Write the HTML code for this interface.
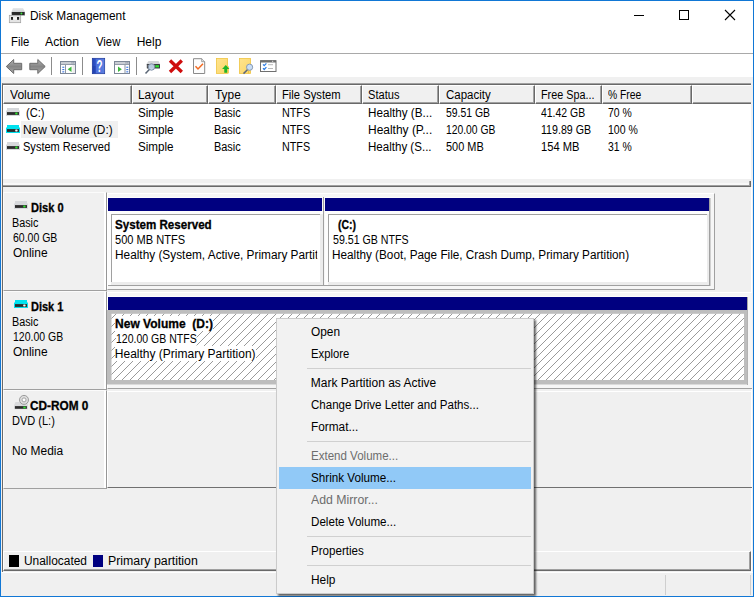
<!DOCTYPE html>
<html><head><meta charset="utf-8"><title>Disk Management</title>
<style>
*{box-sizing:border-box;margin:0;padding:0}
html,body{width:754px;height:597px;overflow:hidden;background:#fff}
body{font-family:"Liberation Sans",sans-serif;font-size:12px;color:#000;position:relative}
.a{position:absolute}
.t{position:absolute;transform-origin:0 0;white-space:nowrap;line-height:14px;height:14px;font-size:12px}
.b{font-weight:bold;-webkit-text-stroke:.3px #000}
.hc{position:absolute;top:85px;height:19px;background:#f0f0f0;border-top:1px solid #fff;border-left:1px solid #fff;border-right:1px solid #696969;border-bottom:1px solid #696969;box-shadow:inset -1px -1px 0 #a0a0a0}
.lp{position:absolute;left:3px;width:104px;height:99px;background:#f0f0f0;border-left:1px solid #fbfbfb;border-top:1px solid #fbfbfb;border-right:1px solid #969696;border-bottom:1px solid #a0a0a0}
.lp i{position:absolute;right:0;top:0;width:2px;height:100%;background:#fff}
.navy{position:absolute;height:13px;background:#000080}
.box{position:absolute;background:#fff;border-top:1px solid #a0a0a0;border-left:1px solid #a0a0a0}
.cell{position:absolute;background:#ececec;box-shadow:inset 3px 3px 0 #fdfdfd}
.ms{position:absolute;left:307px;width:224px;height:1px;background:#d0d0d0}
</style></head><body>
<!-- window frame -->
<div class="a" style="left:0;top:0;width:754px;height:597px;border:1px solid #1177d5;background:#fff"></div>

<!-- title bar -->
<svg class="a" style="left:0;top:0" width="40" height="30" viewBox="0 0 40 30">
 <defs><linearGradient id="gt" x1="0" y1="0" x2="0" y2="1"><stop offset="0" stop-color="#e8eaec"/><stop offset="1" stop-color="#b4b7bb"/></linearGradient></defs>
 <path d="M13 8h10l2 4v4h-13.500v-4z" fill="url(#gt)"/>
 <rect x="11.800" y="12" width="12.900" height="2.900" rx=".4" fill="#2a2a2a"/>
 <circle cx="21.400" cy="13.450" r=".95" fill="#3be43b"/>
 <rect x="9.300" y="15.300" width="11.400" height="7.400" fill="#e4e4e4" stroke="#9d9d9d" stroke-width=".7"/>
 <rect x="11" y="17" width="2.100" height="2.800" fill="#222"/>
 <rect x="17" y="17" width="2.100" height="2.800" fill="#222"/>
 <rect x="13.100" y="17.300" width="3.900" height="2.200" fill="#f6f6f6"/>
</svg>
<div class="t" style="left:29.76px;top:9px;transform:scaleX(0.9869)">Disk Management</div>
<div class="a" style="left:634px;top:15px;width:10px;height:1px;background:#000"></div>
<div class="a" style="left:679px;top:10px;width:10px;height:10px;border:1px solid #000"></div>
<svg class="a" style="left:724px;top:9px" width="12" height="12" viewBox="0 0 12 12"><path d="M1 1L11 11M11 1L1 11" stroke="#000" stroke-width="1.100" fill="none"/></svg>

<!-- menu -->
<div class="t" style="left:10.71px;top:35px;transform:scaleX(0.9408)">File</div>
<div class="t" style="left:45.45px;top:35px;transform:scaleX(1.0185)">Action</div>
<div class="t" style="left:96.45px;top:35px;transform:scaleX(0.9437)">View</div>
<div class="t" style="left:136.65px;top:35px">Help</div>
<div class="a" style="left:1px;top:53px;width:752px;height:1px;background:#a9a9a9"></div>

<!-- gray client area below toolbar -->
<div class="a" style="left:1px;top:77px;width:752px;height:519px;background:#f0f0f0"></div>

<!-- toolbar icons -->
<svg class="a" style="left:0;top:54px" width="300" height="23" viewBox="0 54 300 23">
 <defs>
  <linearGradient id="ga" x1="0" y1="0" x2="0" y2="1"><stop offset="0" stop-color="#b4b4b4"/><stop offset=".5" stop-color="#868686"/><stop offset="1" stop-color="#a8a8a8"/></linearGradient>
  <linearGradient id="gh" x1="0" y1="0" x2="1" y2="0"><stop offset="0" stop-color="#2446b8"/><stop offset=".25" stop-color="#2d52c6"/><stop offset=".3" stop-color="#4a6edb"/><stop offset="1" stop-color="#5c7fe0"/></linearGradient>
  <linearGradient id="gy" x1="0" y1="0" x2="1" y2="1"><stop offset="0" stop-color="#ffe48f"/><stop offset="1" stop-color="#fbd667"/></linearGradient>
 </defs>
 <path d="M6.300 66.500l7.400-7v3.800h8v6.400h-8v3.800z" fill="url(#ga)" stroke="#6c6c6c" stroke-width="1" stroke-linejoin="round"/>
 <path d="M45.200 66.500l-7.400-7v3.800h-8v6.400h8v3.800z" fill="url(#ga)" stroke="#6c6c6c" stroke-width="1" stroke-linejoin="round"/>
 <rect x="51" y="57" width="1" height="18" fill="#8c8c8c"/>
 <rect x="60.500" y="61.500" width="15" height="12" fill="#fff" stroke="#7d8797"/>
 <rect x="61" y="62" width="14" height="2.300" fill="#c9cdd4"/>
 <rect x="61" y="64.200" width="14" height=".8" fill="#7d8797"/>
 <rect x="71.500" y="62.400" width="1" height="1" fill="#6f7a8c"/><rect x="73.300" y="62.400" width="1" height="1" fill="#6f7a8c"/>
 <rect x="65" y="65" width="1" height="8" fill="#8c96a5"/>
 <rect x="72.500" y="65" width="2.500" height="8" fill="#ececec"/>
 <rect x="62.300" y="66.700" width="2" height="1.100" fill="#3a74e0"/><rect x="62.300" y="69" width="2" height="1.100" fill="#3a74e0"/><rect x="62.300" y="71.300" width="2" height="1.100" fill="#3a74e0"/>
 <path d="M71.500 66.500v5.600l-3.800-2.800z" fill="#3db83d"/>
 <rect x="82" y="57" width="1" height="18" fill="#8c8c8c"/>
 <rect x="92.300" y="58.300" width="12.400" height="15.400" fill="url(#gh)" stroke="#1d3799" stroke-width=".7"/>
 <rect x="92.700" y="66" width="2.800" height="7.400" fill="#2140ad" opacity=".7"/>
 <text x="99.400" y="71.600" font-family="Liberation Sans, sans-serif" font-size="16" font-weight="bold" fill="#fff" text-anchor="middle" textLength="6" lengthAdjust="spacingAndGlyphs">?</text>
 <rect x="114.500" y="61.500" width="15" height="12" fill="#fff" stroke="#7d8797"/>
 <rect x="115" y="62" width="14" height="2.300" fill="#c9cdd4"/>
 <rect x="115" y="64.200" width="14" height=".8" fill="#7d8797"/>
 <rect x="125.500" y="62.400" width="1" height="1" fill="#6f7a8c"/><rect x="127.300" y="62.400" width="1" height="1" fill="#6f7a8c"/>
 <rect x="124.500" y="65" width="1" height="8" fill="#8c96a5"/>
 <rect x="126.300" y="66.700" width="2" height="1.100" fill="#3a74e0"/><rect x="126.300" y="69" width="2" height="1.100" fill="#3a74e0"/><rect x="126.300" y="71.300" width="2" height="1.100" fill="#3a74e0"/>
 <path d="M118 66.500v5.600l3.800-2.800z" fill="#3db83d"/>
 <rect x="136" y="57" width="1" height="18" fill="#8c8c8c"/>
 <path d="M148.500 61h10l1.500 3v1h-13.500v-1z" fill="#d4d6d9"/>
 <rect x="146.800" y="64" width="13.200" height="4.600" rx=".5" fill="#3a3d42"/>
 <rect x="147.500" y="65" width="2" height="2.500" fill="#777"/>
 <rect x="155.300" y="65.200" width="3.700" height="2.200" fill="#2fe02f"/>
 <circle cx="151.500" cy="67" r="3.200" fill="#c6daf0" fill-opacity=".9" stroke="#7f8fa6" stroke-width="1"/>
 <path d="M149.300 69.600l-3.800 4" stroke="#5a6675" stroke-width="1.500"/>
 <path d="M170 60.600l11.800 11.300M181.800 60.600l-11.800 11.300" stroke="#cf0d0d" stroke-width="3.400"/>
 <path d="M193.500 58.700h8.200l3 3v11.800h-11.200z" fill="#fcfcfc" stroke="#8a8a8a"/>
 <path d="M201.700 58.700v3h3" fill="#e8e8e8" stroke="#8a8a8a" stroke-width=".8"/>
 <path d="M195.500 66.300l2.500 2.700l5-5.200" fill="none" stroke="#f26a21" stroke-width="1.500"/>
 <rect x="216.400" y="58.400" width="11.200" height="15" fill="url(#gy)" stroke="#efc543" stroke-width=".8"/>
 <rect x="224" y="66.300" width="5" height="7.100" fill="#f9d15c"/>
 <path d="M225.800 65l3.600 3.900h-2.200v3.800h-2.900v-3.800h-2.200z" fill="#1fb52a"/>
 <rect x="239.400" y="58.400" width="11.200" height="15" fill="url(#gy)" stroke="#efc543" stroke-width=".8"/>
 <rect x="248" y="70" width="1" height="3.400" fill="#efc543"/>
 <circle cx="249.600" cy="67.200" r="3.100" fill="#c9def5" stroke="#8a9bb3" stroke-width="1"/>
 <path d="M247.400 69.700l-3.900 3.900" stroke="#5d6878" stroke-width="1.500"/>
 <rect x="260.500" y="60.700" width="15.500" height="10.800" fill="#fff" stroke="#6f6f6f"/>
 <rect x="260.500" y="60.300" width="15.500" height="2.200" fill="#6f6f6f"/>
 <rect x="272" y="60.800" width="1.200" height="1" fill="#ddd"/>
 <path d="M263 64.400l1.200 1.300l2.200-2.400M263 68.200l1.200 1.300l2.200-2.400" fill="none" stroke="#2b7be4" stroke-width="1.200"/>
 <rect x="268" y="64.200" width="5" height="1" fill="#b9b9b9"/><rect x="268" y="68" width="5" height="1" fill="#b9b9b9"/>
</svg>

<!-- list view -->
<div class="a" style="left:2px;top:83px;width:749px;height:96px;background:#fff;border-left:1px solid #696969;border-top:1px solid #a0a0a0"></div>
<div class="a" style="left:3px;top:84px;width:748px;height:1px;background:#696969"></div>
<div class="a" style="left:3px;top:85px;width:748px;height:19px;background:#f0f0f0;border-bottom:1px solid #696969"></div>
<div class="hc" style="left:3px;width:129px"></div>
<div class="hc" style="left:132px;width:76px"></div>
<div class="hc" style="left:208px;width:68px"></div>
<div class="hc" style="left:276px;width:86px"></div>
<div class="hc" style="left:362px;width:77px"></div>
<div class="hc" style="left:439px;width:96px"></div>
<div class="hc" style="left:535px;width:67px"></div>
<div class="hc" style="left:602px;width:90px"></div>
<div class="hc" style="left:692px;width:59px;border-right:none;box-shadow:inset 0 -1px 0 #a0a0a0"></div>
<div class="t" style="left:9.65px;top:88px;transform:scaleX(1.0051)">Volume</div>
<div class="t" style="left:137.96px;top:88px;transform:scaleX(0.9914)">Layout</div>
<div class="t" style="left:214.8px;top:88px;transform:scaleX(0.9901)">Type</div>
<div class="t" style="left:282.01px;top:88px;transform:scaleX(0.9361)">File System</div>
<div class="t" style="left:368.39px;top:88px;transform:scaleX(0.9242)">Status</div>
<div class="t" style="left:445.67px;top:88px;transform:scaleX(0.9565)">Capacity</div>
<div class="t" style="left:540.95px;top:88px;transform:scaleX(0.8996)">Free Spa...</div>
<div class="t" style="left:608.22px;top:88px;transform:scaleX(0.8609)">% Free</div>

<!-- rows -->
<div class="a" style="left:21px;top:121px;width:97px;height:17px;background:#f0f0f0"></div>
<svg class="a" style="left:6px;top:108px" width="14" height="8" viewBox="0 0 14 8"><path d="M1 0h12v2.300l1 .4v5.300h-14v-5.300l1-.4z" fill="#d6d8db"/><rect x="1" y="4.100" width="12" height="2.800" fill="#2b2b2b"/><rect x="9.200" y="4.600" width="2.400" height="1.800" rx=".6" fill="#2ee02e"/></svg><svg class="a" style="left:6px;top:125px" width="14" height="8" viewBox="0 0 14 8"><path d="M1 0h12v2.300l1 .4v5.300h-14v-5.300l1-.4z" fill="#00e1ee"/><rect x="1" y="4.100" width="12" height="2.800" fill="#2b2b2b"/><rect x="9.200" y="4.600" width="2.400" height="1.800" rx=".6" fill="#f4f4f4"/></svg><svg class="a" style="left:6px;top:142px" width="14" height="8" viewBox="0 0 14 8"><path d="M1 0h12v2.300l1 .4v5.300h-14v-5.300l1-.4z" fill="#d6d8db"/><rect x="1" y="4.100" width="12" height="2.800" fill="#2b2b2b"/><rect x="9.200" y="4.600" width="2.400" height="1.800" rx=".6" fill="#2ee02e"/></svg>
<div class="t" style="left:26.45px;top:106px;transform:scaleX(0.9297)">(C:)</div>
<div class="t" style="left:22.86px;top:123px;transform:scaleX(0.9888)">New Volume (D:)</div>
<div class="t" style="left:23.39px;top:140px;transform:scaleX(0.9198)">System Reserved</div>
<div class="t" style="left:138.46px;top:106px;transform:scaleX(0.9706)">Simple</div><div class="t" style="left:138.46px;top:123px;transform:scaleX(0.9706)">Simple</div><div class="t" style="left:138.46px;top:140px;transform:scaleX(0.9706)">Simple</div>
<div class="t" style="left:214.14px;top:106px;transform:scaleX(0.9107)">Basic</div><div class="t" style="left:214.14px;top:123px;transform:scaleX(0.9107)">Basic</div><div class="t" style="left:214.14px;top:140px;transform:scaleX(0.9107)">Basic</div>
<div class="t" style="left:282.05px;top:106px;transform:scaleX(0.8975)">NTFS</div><div class="t" style="left:282.05px;top:123px;transform:scaleX(0.8975)">NTFS</div><div class="t" style="left:282.05px;top:140px;transform:scaleX(0.8975)">NTFS</div>
<div class="t" style="left:368.18px;top:106px;transform:scaleX(0.9734)">Healthy (B...</div><div class="t" style="left:368.15px;top:123px;transform:scaleX(0.9968)">Healthy (P...</div><div class="t" style="left:368.19px;top:140px;transform:scaleX(0.9625)">Healthy (S...</div>
<div class="t" style="left:445.72px;top:106px;transform:scaleX(0.8667)">59.51 GB</div><div class="t" style="left:445.99px;top:123px;transform:scaleX(0.861)">120.00 GB</div><div class="t" style="left:445.69px;top:140px;transform:scaleX(0.9118)">500 MB</div>
<div class="t" style="left:541.13px;top:106px;transform:scaleX(0.8704)">41.42 GB</div><div class="t" style="left:541.26px;top:123px;transform:scaleX(0.8855)">119.89 GB</div><div class="t" style="left:541.22px;top:140px;transform:scaleX(0.9308)">154 MB</div>
<div class="t" style="left:607.72px;top:106px;transform:scaleX(0.8679)">70 %</div><div class="t" style="left:607.77px;top:123px;transform:scaleX(0.8763)">100 %</div><div class="t" style="left:607.72px;top:140px;transform:scaleX(0.8679)">31 %</div>

<!-- splitter -->
<div class="a" style="left:3px;top:181px;width:748px;height:6px;background:linear-gradient(#f0f0f0 0,#f0f0f0 2px,#f8f8f8 2px);border-bottom:1px solid #696969;border-right:1px solid #696969;box-shadow:inset -1px -1px 0 #a0a0a0"></div>
<div class="a" style="left:2px;top:179px;width:1px;height:393px;background:#696969"></div>
<div class="a" style="left:751px;top:187px;width:1px;height:386px;background:#fff"></div>

<!-- disk 0 -->
<div class="lp" style="top:192px"><i></i></div>
<svg class="a" style="left:14px;top:201px" width="14" height="8" viewBox="0 0 14 8"><path d="M1 0h12v2.300l1 .4v5.300h-14v-5.300l1-.4z" fill="#d6d8db"/><rect x="1" y="4.100" width="12" height="2.800" fill="#2b2b2b"/><rect x="9.200" y="4.600" width="2.400" height="1.800" rx=".6" fill="#2ee02e"/></svg>
<div class="t b" style="left:30.96px;top:201px;transform:scaleX(0.9226)">Disk 0</div>
<div class="t" style="left:12.15px;top:216px;transform:scaleX(0.9)">Basic</div>
<div class="t" style="left:12.61px;top:231px;transform:scaleX(0.8747)">60.00 GB</div>
<div class="t" style="left:12.55px;top:246px;transform:scaleX(0.9956)">Online</div>
<div class="a" style="left:107px;top:193px;width:608px;height:97px;background:#f6f6f6;border-top:1px solid #fff;border-left:1px solid #fff;border-right:1px solid #a0a0a0;border-bottom:1px solid #a0a0a0"></div>
<div class="a" style="left:108px;top:198px;width:602px;height:88px;border-right:1px solid #a0a0a0;border-bottom:1px solid #a0a0a0"></div>
<div class="a" style="left:710px;top:198px;width:1px;height:88px;background:#d0d0d0"></div>
<div class="cell" style="left:108px;top:211px;width:215px;height:74px"></div>
<div class="cell" style="left:325px;top:211px;width:384px;height:74px"></div>
<div class="a" style="left:108px;top:197px;width:603px;height:1px;background:#fdfdfd"></div>
<div class="navy" style="left:108px;top:198px;width:214px"></div>
<div class="a" style="left:323px;top:197px;width:1px;height:89px;background:#a0a0a0"></div>
<div class="navy" style="left:325px;top:198px;width:384px"></div>
<div class="box" style="left:111px;top:214px;width:209px;height:68px"></div>
<div class="box" style="left:328px;top:214px;width:379px;height:68px"></div>
<div class="t b" style="left:115.27px;top:218px;transform:scaleX(0.9661)">System Reserved</div>
<div class="t" style="left:115.29px;top:233px;transform:scaleX(0.9213)">500 MB NTFS</div>
<div class="t" style="left:114.76px;top:248px;transform:scaleX(0.9864);width:205.3px;overflow:hidden">Healthy (System, Active, Primary Partition)</div>
<div class="t b" style="left:338.31px;top:218px;transform:scaleX(0.8718)">(C:)</div>
<div class="t" style="left:332.51px;top:233px;transform:scaleX(0.8855)">59.51 GB NTFS</div>
<div class="t" style="left:331.97px;top:248px;transform:scaleX(0.979)">Healthy (Boot, Page File, Crash Dump, Primary Partition)</div>

<!-- disk 1 -->
<div class="lp" style="top:291px"><i></i></div>
<svg class="a" style="left:14px;top:300px" width="14" height="8" viewBox="0 0 14 8"><path d="M1 0h12v2.300l1 .4v5.300h-14v-5.300l1-.4z" fill="#00e1ee"/><rect x="1" y="4.100" width="12" height="2.800" fill="#2b2b2b"/><rect x="9.200" y="4.600" width="2.400" height="1.800" rx=".6" fill="#f4f4f4"/></svg>
<div class="t b" style="left:30.66px;top:300px;transform:scaleX(0.9168)">Disk 1</div>
<div class="t" style="left:12.15px;top:315px;transform:scaleX(0.9)">Basic</div>
<div class="t" style="left:12.78px;top:330px;transform:scaleX(0.8735)">120.00 GB</div>
<div class="t" style="left:12.55px;top:345px;transform:scaleX(0.9956)">Online</div>
<div class="a" style="left:107px;top:292px;width:645px;height:97px;background:#f6f6f6;border-top:1px solid #fff;border-left:1px solid #fff;border-bottom:1px solid #a0a0a0"></div>
<div class="navy" style="left:108px;top:297px;width:639px"></div>
<div class="a" style="left:747px;top:296px;width:1px;height:89px;background:#a8a8a8"></div>
<div class="a" style="left:108px;top:296px;width:640px;height:1px;background:#fdfdfd"></div>
<svg class="a" style="left:107px;top:310px" width="641" height="74.500" viewBox="0 0 641 74.500">
 <defs><pattern id="h" x="5" y="0" width="8" height="8" patternUnits="userSpaceOnUse"><path d="M-1 9L9 -1M-1 1L1 -1M7 9L9 7" stroke="#808080" stroke-width=".8" fill="none"/></pattern></defs>
 <rect x="0" y="0" width="640.500" height="74.500" fill="#bdbdbd"/>
 <rect x="4.500" y="3.800" width="632.500" height="66.200" fill="#fff"/>
 <rect x="4.500" y="3.800" width="632.500" height="66.200" fill="url(#h)"/>
</svg>
<div class="t b" style="left:115.1px;top:316px;white-space:pre;background:#fff;height:15px;padding-top:1px">New Volume  (D:)</div>
<div class="t" style="left:116.07px;top:331px;transform:scaleX(0.8762);background:#fff;height:15px;padding-top:1px">120.00 GB NTFS</div>
<div class="t" style="left:114.85px;top:346px;background:#fff;height:15px;padding-top:1px">Healthy (Primary Partition)</div>

<!-- cd-rom -->
<div class="lp" style="top:390px"><i></i></div>
<svg class="a" style="left:8px;top:390px" width="30" height="24" viewBox="8 390 30 24">
 <path d="M15.500 402h11.500l1 3v4.200h-13.800v-4.200z" fill="#d9dadc"/>
 <circle cx="24" cy="399.900" r="4.500" fill="#dedede" stroke="#9c9c9c" stroke-width="1"/>
 <circle cx="24" cy="399.900" r="2" fill="#fff" stroke="#9c9c9c" stroke-width=".9"/>
 <rect x="14.900" y="406.100" width="12" height="2.700" fill="#2d2d2d"/>
 <rect x="23.300" y="406.600" width="2.400" height="1.800" fill="#2ee02e"/>
</svg>
<div class="t b" style="left:30.26px;top:399px;transform:scaleX(0.9846)">CD-ROM 0</div>
<div class="t" style="left:12.13px;top:414px;transform:scaleX(0.9178)">DVD (L:)</div>
<div class="t" style="left:12.06px;top:444px;transform:scaleX(0.9941)">No Media</div>
<div class="a" style="left:107px;top:391px;width:645px;height:97px;border-top:1px solid #fff;border-left:1px solid #fff;border-bottom:1px solid #707070"></div>

<!-- legend -->
<div class="a" style="left:3px;top:551px;width:748px;height:20px;border-top:1px solid #fff;border-left:1px solid #fff;border-right:1px solid #696969;border-bottom:1px solid #696969;box-shadow:inset -1px -1px 0 #a0a0a0"></div>
<div class="a" style="left:1px;top:572px;width:752px;height:1px;background:#fff"></div>
<div class="a" style="left:9px;top:555px;width:10px;height:12px;background:#000"></div>
<div class="t" style="left:23.96px;top:554px;transform:scaleX(0.9935)">Unallocated</div>
<div class="a" style="left:93px;top:555px;width:10px;height:12px;background:#000080"></div>
<div class="t" style="left:107.62px;top:554px;transform:scaleX(1.0281)">Primary partition</div>

<!-- status bar -->
<div class="a" style="left:665px;top:575px;width:1px;height:20px;background:#cfcfcf"></div>
<div class="a" style="left:750px;top:575px;width:1px;height:20px;background:#cfcfcf"></div>

<!-- context menu -->
<div class="a" style="left:276px;top:318px;width:258px;height:276px;background:#f2f2f2;border:1px solid #cbcbcb;box-shadow:2px 2px 2px rgba(0,0,0,.6)"></div>
<div class="a" style="left:279px;top:467px;width:252px;height:22px;background:#91c9f7"></div>
<div class="t" style="left:311.16px;top:325px;transform:scaleX(0.9893)">Open</div>
<div class="t" style="left:310.91px;top:347px;transform:scaleX(0.9376)">Explore</div>
<div class="ms" style="top:368px"></div>
<div class="t" style="left:310.85px;top:376px">Mark Partition as Active</div>
<div class="t" style="left:311.17px;top:398px;transform:scaleX(0.9605)">Change Drive Letter and Paths...</div>
<div class="t" style="left:310.87px;top:420px;transform:scaleX(0.9848)">Format...</div>
<div class="ms" style="top:441px"></div>
<div class="t" style="left:310.89px;top:449px;transform:scaleX(0.9611);color:#6d6d6d">Extend Volume...</div>
<div class="t" style="left:311.16px;top:471px;transform:scaleX(0.9726)">Shrink Volume...</div>
<div class="t" style="left:311.45px;top:493px;transform:scaleX(1.0241);color:#6d6d6d">Add Mirror...</div>
<div class="t" style="left:310.88px;top:515px;transform:scaleX(0.9674)">Delete Volume...</div>
<div class="ms" style="top:536px"></div>
<div class="t" style="left:310.88px;top:544px;transform:scaleX(0.9653)">Properties</div>
<div class="ms" style="top:565px"></div>
<div class="t" style="left:310.86px;top:573px;transform:scaleX(0.9892)">Help</div>
</body></html>
